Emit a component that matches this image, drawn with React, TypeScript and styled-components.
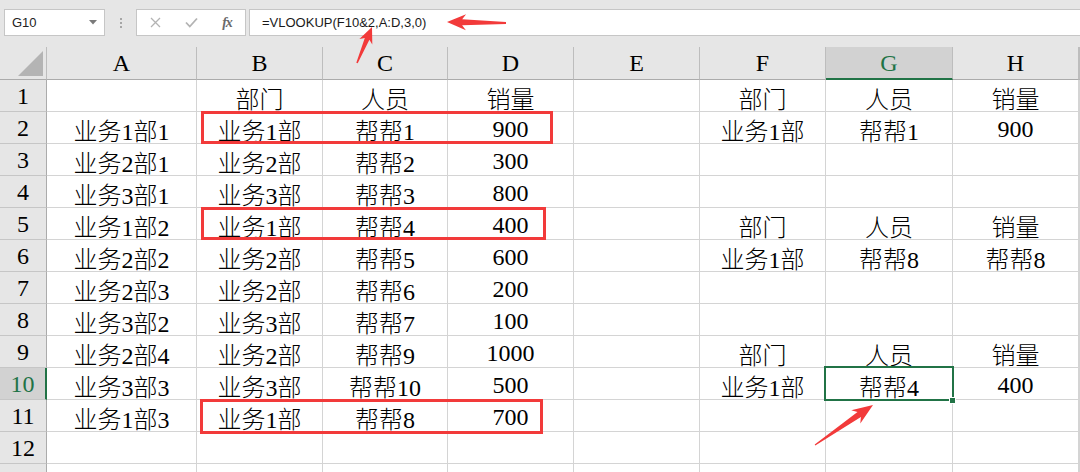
import React from "react";
import styled, { createGlobalStyle } from "styled-components";

const GlobalStyle = createGlobalStyle`
  html, body { margin: 0; padding: 0; background: #ffffff; overflow: hidden; }
  * { box-sizing: border-box; }
`;

const GREEN = "#217346";
const RED = "#f23a3a";

const COLS = [47, 150, 126, 125, 126, 126, 126, 127, 126];
const LETTERS = ["A", "B", "C", "D", "E", "F", "G", "H"];

const DATA: string[][] = [
  ["", "部门", "人员", "销量", "", "部门", "人员", "销量"],
  ["业务1部1", "业务1部", "帮帮1", "900", "", "业务1部", "帮帮1", "900"],
  ["业务2部1", "业务2部", "帮帮2", "300", "", "", "", ""],
  ["业务3部1", "业务3部", "帮帮3", "800", "", "", "", ""],
  ["业务1部2", "业务1部", "帮帮4", "400", "", "部门", "人员", "销量"],
  ["业务2部2", "业务2部", "帮帮5", "600", "", "业务1部", "帮帮8", "帮帮8"],
  ["业务2部3", "业务2部", "帮帮6", "200", "", "", "", ""],
  ["业务3部2", "业务3部", "帮帮7", "100", "", "", "", ""],
  ["业务2部4", "业务2部", "帮帮9", "1000", "", "部门", "人员", "销量"],
  ["业务3部3", "业务3部", "帮帮10", "500", "", "业务1部", "帮帮4", "400"],
  ["业务1部3", "业务1部", "帮帮8", "700", "", "", "", ""],
  ["", "", "", "", "", "", "", ""],
];

const Page = styled.div`
  position: relative;
  width: 1080px;
  height: 472px;
  overflow: hidden;
  background: #ffffff;
`;

const Toolbar = styled.div`
  display: flex;
  align-items: flex-start;
  height: 47px;
  padding: 9px 0 0 4px;
  background: #e6e6e6;
`;

const NameBox = styled.div`
  display: flex;
  align-items: center;
  width: 101px;
  height: 27px;
  padding: 0 7px 0 7px;
  background: #ffffff;
  border: 1px solid #c6c6c6;
  font-family: "Liberation Sans", "Noto Sans", sans-serif;
  font-size: 13px;
  color: #222222;
`;

const NameText = styled.span`
  flex: 1;
`;

const Grip = styled.div`
  width: 31px;
  height: 27px;
  display: flex;
  flex-direction: column;
  align-items: center;
  justify-content: center;
  gap: 2px;
`;

const Dot = styled.span`
  width: 2px;
  height: 2px;
  background: #a6a6a6;
`;

const FuncBox = styled.div`
  display: flex;
  align-items: center;
  width: 110px;
  height: 27px;
  background: #ffffff;
  border: 1px solid #c6c6c6;
`;

const FuncSlot = styled.div`
  width: 36px;
  height: 100%;
  display: flex;
  align-items: center;
  justify-content: center;
`;

const Fx = styled.span`
  font-family: "Liberation Serif", serif;
  font-style: italic;
  font-weight: bold;
  font-size: 14px;
  color: #6a6a6a;
  letter-spacing: -1px;
`;

const FormulaBox = styled.div`
  flex: 1;
  display: flex;
  align-items: center;
  height: 27px;
  margin-left: 3px;
  padding-left: 12px;
  background: #ffffff;
  border: 1px solid #c6c6c6;
  border-right: none;
  font-family: "Liberation Sans", "Noto Sans", sans-serif;
  font-size: 13px;
  color: #1a1a1a;
`;

const Grid = styled.div`
  display: grid;
  grid-template-columns: ${COLS.map((c) => `${c}px`).join(" ")} 1fr;
  grid-template-rows: 33px repeat(12, 32px) 32px;
  font-family: "Liberation Serif", "Noto Sans CJK SC", serif;
  font-size: 24px;
  font-weight: 300;
  color: #000000;
`;

const Corner = styled.div`
  position: relative;
  background: #e6e6e6;
  border-right: 1px solid #bdbdbd;
  border-bottom: 1px solid #ababab;
`;

const CornerTri = styled.svg`
  position: absolute;
  right: 3px;
  bottom: 3px;
`;

const ColHeader = styled.div<{ $active?: boolean }>`
  display: flex;
  align-items: center;
  justify-content: center;
  background: ${(p) => (p.$active ? "#d2d2d2" : "#e6e6e6")};
  color: ${(p) => (p.$active ? GREEN : "#000")};
  border-right: 1px solid #bdbdbd;
  border-bottom: ${(p) => (p.$active ? `2px solid ${GREEN}` : "1px solid #ababab")};
  padding-top: ${(p) => (p.$active ? "1px" : "0")};
`;

const RowHeader = styled.div<{ $active?: boolean }>`
  display: flex;
  align-items: center;
  justify-content: center;
  padding-top: 2px;
  background: ${(p) => (p.$active ? "#d2d2d2" : "#e6e6e6")};
  color: ${(p) => (p.$active ? GREEN : "#000")};
  border-right: ${(p) => (p.$active ? `2px solid ${GREEN}` : "1px solid #ababab")};
  border-bottom: 1px solid #c6c6c6;
`;

const Cell = styled.div`
  display: flex;
  align-items: center;
  justify-content: center;
  padding-top: 3px;
  white-space: nowrap;
  overflow: hidden;
  border-right: 1px solid #d4d4d4;
  border-bottom: 1px solid #d4d4d4;
`;

const RedBox = styled.div`
  position: absolute;
  border: 3px solid ${RED};
  pointer-events: none;
`;

const Selection = styled.div`
  position: absolute;
  left: 824px;
  top: 366px;
  width: 130px;
  height: 35px;
  border: 2px solid ${GREEN};
`;

const FillHandle = styled.div`
  position: absolute;
  left: 949px;
  top: 397px;
  width: 7px;
  height: 7px;
  background: ${GREEN};
  border: 1px solid #ffffff;
`;

const ArrowLayer = styled.svg`
  position: absolute;
  left: 0;
  top: 0;
  pointer-events: none;
`;

type P = [number, number];

function arrowPath(tail: P, tip: P, headLen: number, headHalf: number, shaftHead: number, shaftTail: number) {
  const dx = tip[0] - tail[0];
  const dy = tip[1] - tail[1];
  const len = Math.hypot(dx, dy);
  const ux = dx / len;
  const uy = dy / len;
  const nx = -uy;
  const ny = ux;
  const at = (along: number, side: number): P => [tip[0] - ux * along + nx * side, tip[1] - uy * along + ny * side];
  const pts: P[] = [
    tip,
    at(headLen, headHalf),
    at(headLen * 0.8, shaftHead),
    [tail[0] + nx * shaftTail, tail[1] + ny * shaftTail],
    [tail[0] - nx * shaftTail, tail[1] - ny * shaftTail],
    at(headLen * 0.8, -shaftHead),
    at(headLen, -headHalf),
  ];
  return pts.map((p) => `${p[0].toFixed(1)},${p[1].toFixed(1)}`).join(" ");
}

const ARROWS = [
  arrowPath([506, 23], [447, 22], 19, 8, 3, 1),
  arrowPath([357, 63], [372, 27], 16, 7, 2.5, 0.8),
  arrowPath([815, 445], [873, 405], 21, 8, 3, 0.6),
];

const RED_BOXES = [
  { left: 201, top: 111, width: 352, height: 33 },
  { left: 201, top: 207, width: 345, height: 33 },
  { left: 200, top: 399, width: 343, height: 35 },
];

export default function App() {
  return (
    <Page>
      <GlobalStyle />
      <Toolbar>
        <NameBox>
          <NameText>G10</NameText>
          <svg width="8" height="5" viewBox="0 0 8 5">
            <polygon points="0,0 8,0 4,4.5" fill="#7a7a7a" />
          </svg>
        </NameBox>
        <Grip>
          <Dot />
          <Dot />
          <Dot />
        </Grip>
        <FuncBox>
          <FuncSlot>
            <svg width="11" height="11" viewBox="0 0 11 11">
              <path d="M1 1 L10 10 M10 1 L1 10" stroke="#b3b3b3" strokeWidth="1.3" fill="none" />
            </svg>
          </FuncSlot>
          <FuncSlot>
            <svg width="13" height="11" viewBox="0 0 13 11">
              <path d="M1 5.5 L4.8 9.5 L12 1.5" stroke="#b3b3b3" strokeWidth="1.8" fill="none" />
            </svg>
          </FuncSlot>
          <FuncSlot>
            <Fx>fx</Fx>
          </FuncSlot>
        </FuncBox>
        <FormulaBox>=VLOOKUP(F10&amp;2,A:D,3,0)</FormulaBox>
      </Toolbar>
      <Grid>
        <Corner>
          <CornerTri width="25" height="25" viewBox="0 0 25 25">
            <polygon points="25,0 25,25 0,25" fill="#b4b4b4" />
          </CornerTri>
        </Corner>
        {LETTERS.map((l, i) => (
          <ColHeader key={`h${i}`} $active={l === "G"}>
            {l}
          </ColHeader>
        ))}
        <ColHeader />
        {Array.from({ length: 13 }).map((_, r) => (
          <React.Fragment key={`r${r}`}>
            <RowHeader $active={r === 9}>{r < 12 ? r + 1 : ""}</RowHeader>
            {LETTERS.map((__, c) => (
              <Cell key={`c${r}-${c}`}>{(DATA[r] && DATA[r][c]) || ""}</Cell>
            ))}
            <Cell />
          </React.Fragment>
        ))}
      </Grid>
      {RED_BOXES.map((b, i) => (
        <RedBox key={i} style={{ left: b.left, top: b.top, width: b.width, height: b.height }} />
      ))}
      <Selection />
      <FillHandle />
      <ArrowLayer width="1080" height="472" viewBox="0 0 1080 472">
        {ARROWS.map((pts, i) => (
          <polygon key={i} points={pts} fill={RED} />
        ))}
      </ArrowLayer>
    </Page>
  );
}
